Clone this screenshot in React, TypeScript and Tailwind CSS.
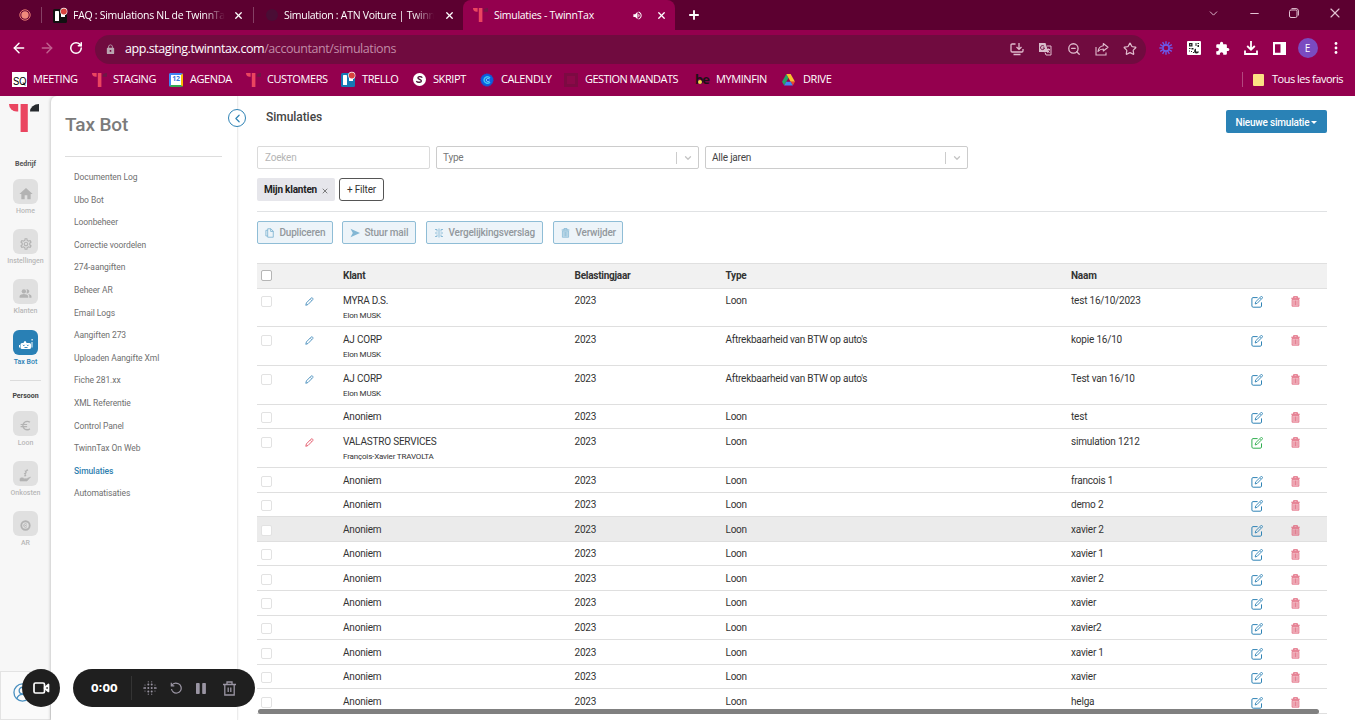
import type { ReactNode } from 'react';
import {
  ArrowLeft, ArrowRight, ChevronDown, ChevronLeft, Minus, Plus, RotateCw, Star, X, ZoomOut,
} from 'lucide-react';
import { MdEuroSymbol, MdExtension, MdHome, MdLock, MdOutlineSettings, MdPeopleAlt, MdVolumeUp } from 'react-icons/md';

type Row = {
  client: string;
  sub?: string;
  type: string;
  name: string;
  pencil?: string;
  edit?: string;
  active?: boolean;
};

const rows: Row[] = [
  { client: 'MYRA D.S.', sub: 'Elon MUSK', type: 'Loon', name: 'test 16/10/2023', pencil: 'text-[#3b87b8]' },
  { client: 'AJ CORP', sub: 'Elon MUSK', type: "Aftrekbaarheid van BTW op auto's", name: 'kopie 16/10', pencil: 'text-[#3b87b8]' },
  { client: 'AJ CORP', sub: 'Elon MUSK', type: "Aftrekbaarheid van BTW op auto's", name: 'Test van 16/10', pencil: 'text-[#3b87b8]' },
  { client: 'Anoniem', type: 'Loon', name: 'test' },
  { client: 'VALASTRO SERVICES', sub: 'François-Xavier TRAVOLTA', type: 'Loon', name: 'simulation 1212', pencil: 'text-[#e0485c]', edit: 'text-[#2fae4e]' },
  { client: 'Anoniem', type: 'Loon', name: 'francois 1' },
  { client: 'Anoniem', type: 'Loon', name: 'demo 2' },
  { client: 'Anoniem', type: 'Loon', name: 'xavier 2', active: true },
  { client: 'Anoniem', type: 'Loon', name: 'xavier 1' },
  { client: 'Anoniem', type: 'Loon', name: 'xavier 2' },
  { client: 'Anoniem', type: 'Loon', name: 'xavier' },
  { client: 'Anoniem', type: 'Loon', name: 'xavier2' },
  { client: 'Anoniem', type: 'Loon', name: 'xavier 1' },
  { client: 'Anoniem', type: 'Loon', name: 'xavier' },
  { client: 'Anoniem', type: 'Loon', name: 'helga' },
];

const menu = [
  'Documenten Log', 'Ubo Bot', 'Loonbeheer', 'Correctie voordelen', '274-aangiften', 'Beheer AR', 'Email Logs',
  'Aangiften 273', 'Uploaden Aangifte Xml', 'Fiche 281.xx', 'XML Referentie', 'Control Panel', 'TwinnTax On Web',
  'Simulaties', 'Automatisaties',
];

const COLS = 'grid grid-cols-[48px_38px_231.5px_151px_345.5px_179.5px_40px_36.5px]';

function TwinnLogo({ className, dark = '#262a2e' }: { className: string; dark?: string }) {
  return (
    <svg viewBox="0 0 30 28" className={className}>
      <path d="M0 0h9.2v7.4H7.5A7.5 7.4 0 0 1 0 0z" fill="#ea4560" />
      <path d="M11.6 0h7.2v28h-7.2z" fill="#ea4560" />
      <path d="M30 0v7.4h-9A9 7.4 0 0 1 30 0z" fill={dark} />
    </svg>
  );
}

function TrelloIcon({ bg }: { bg: string }) {
  return (
    <svg viewBox="0 0 15 15" className="size-[15px] shrink-0 overflow-visible">
      <rect y="1" width="14" height="14" rx="1.5" fill={bg} />
      <rect x="2" y="3" width="4" height="10" rx=".6" fill="#fff" />
      <rect x="8" y="3" width="4" height="6" rx=".6" fill="#fff" />
      <circle cx="10.8" cy="3.4" r="3.6" fill="#fff" />
      <circle cx="10.8" cy="3.4" r="3" fill="#d8443f" />
    </svg>
  );
}

function TrashIcon({ className }: { className: string }) {
  return (
    <svg viewBox="0 0 9 11" className={className} fill="none" stroke="currentColor">
      <path d="M.3 2.2h8.4M2.8 2V.8h3.4V2" strokeWidth="1.1" />
      <path d="M1.1 3.4h6.8v6.8H1.1z" fill="currentColor" fillOpacity=".35" strokeWidth=".8" />
      <path d="M3 4.4v4.8M4.5 4.4v4.8M6 4.4v4.8" strokeWidth=".7" />
    </svg>
  );
}

function EditIcon({ className }: { className: string }) {
  return (
    <svg viewBox="0 0 12 12" className={className} fill="none" stroke="currentColor" strokeWidth="1">
      <path d="M6.6 1.6H2A1.2 1.2 0 0 0 .9 2.8v7.2c0 .7.5 1.2 1.2 1.2h7.2c.7 0 1.2-.5 1.2-1.2V6.4" />
      <path d="M4.2 8l.5-2.2L9.8.8c.4-.4 1-.4 1.4 0s.4 1 0 1.4L6.2 7.3z" strokeWidth=".9" />
      <path d="M9 1.8l1.3 1.3" strokeWidth=".7" />
    </svg>
  );
}

function PencilIcon({ className }: { className: string }) {
  return (
    <svg viewBox="0 0 9 9" className={className} fill="none" stroke="currentColor" strokeWidth=".85">
      <path d="M.8 8.3l.6-2.4L6 1.2c.5-.5 1.2-.5 1.6 0 .5.4.5 1.1 0 1.6L3 7.5z" />
      <path d="M5.2 2.100l1.600 1.600" strokeWidth=".6" />
    </svg>
  );
}

function TabTitle({ children, className }: { children: ReactNode; className: string }) {
  return <span className={`py-1 text-[10.500px] leading-none tracking-[-0.28px] whitespace-nowrap ${className}`}>{children}</span>;
}

function TabStrip() {
  return (
    <div className="flex h-[30px] items-center bg-[#5c0030] text-white">
      <div className="flex w-[41px] justify-end pr-[10px]">
        <svg viewBox="0 0 12 12" className="size-3">
          <circle cx="6" cy="6" r="5.2" fill="none" stroke="#e87a72" strokeWidth="1" />
          <circle cx="6" cy="6" r="3.7" fill="#f08a7c" />
        </svg>
      </div>
      <div className="flex h-4 w-[212px] items-center border-l border-white/25 pl-[11px]">
        <TrelloIcon bg="#111111" />
        <TabTitle className="ml-[5px] w-[152px] [mask-image:linear-gradient(to_right,black_86%,transparent)]">FAQ : Simulations NL de TwinnTa</TabTitle>
        <X className="ml-[8px] size-[11px]" strokeWidth={2.8} />
      </div>
      <div className="flex h-4 w-[210px] items-center border-l border-white/25 pl-[12px]">
        <span className="size-3 shrink-0 rounded-full bg-[#4a0d35]" />
        <TabTitle className="ml-[6px] w-[150px] [mask-image:linear-gradient(to_right,black_86%,transparent)]">Simulation : ATN Voiture | Twinn</TabTitle>
        <X className="ml-[10px] size-[11px] shrink-0" strokeWidth={2.8} />
      </div>
      <div className="flex h-[30px] w-[212px] items-center rounded-t-lg bg-[#94004e] pl-[10px]">
        <TwinnLogo className="h-[14px] w-[15px]" dark="#6d1845" />
        <TabTitle className="ml-[6px] w-[130px]">Simulaties - TwinnTax</TabTitle>
        <MdVolumeUp className="ml-[8px] size-[11px]" />
        <X className="ml-[13px] size-[11px]" strokeWidth={2.8} />
      </div>
      <Plus className="ml-[12px] size-[14px]" strokeWidth={3.2} />
      <div className="ml-auto flex w-[162px] items-center pb-1 text-[#e3c3d3]">
        <ChevronDown className="ml-[14px] size-[13px]" strokeWidth={1.7} />
        <Minus className="ml-[28px] size-[13px]" strokeWidth={2} />
        <svg viewBox="0 0 10 10" className="ml-[28px] size-[10px]" fill="none" stroke="currentColor">
          <rect x=".5" y="2" width="7.5" height="7.5" rx="1.5" />
          <path d="M2.5.6H7A2.4 2.4 0 0 1 9.4 3v4.5" />
        </svg>
        <X className="ml-[28px] size-[16px]" strokeWidth={1.7} />
      </div>
    </div>
  );
}

function Toolbar() {
  return (
    <div className="flex h-[36px] items-center bg-[#94004e] text-white">
      <ArrowLeft className="ml-[11px] size-4" strokeWidth={2.2} />
      <ArrowRight className="ml-[12px] size-4 text-[#c0608f]" strokeWidth={2.2} />
      <RotateCw className="ml-[14px] size-[14px]" strokeWidth={2.6} />
      <div className="mt-[2px] ml-[12px] flex h-[29px] w-[1051px] items-center rounded-full bg-[#700b3f] text-[#e0bccd]">
        <MdLock className="ml-[10px] size-[11px] text-[#b9a5b0]" />
        <div className="ml-[9px] w-[878px] shrink-0 text-[12.500px] tracking-[-0.43px] whitespace-nowrap">
          <span className="text-white">app.staging.twinntax.com</span>
          <span className="text-[#c18aa6]">/accountant/simulations</span>
        </div>
        <div className="flex w-[142px] shrink-0">
          <div className="flex w-[28.300px] justify-center">
            <svg viewBox="0 0 14 14" className="size-[14px]" fill="none" stroke="currentColor" strokeWidth="1.3">
              <path d="M5.5 2H2.2Q1 2 1 3.2v5.6Q1 10 2.2 10h9.6q1.2 0 1.2-1.200V7M3.500 12.500h7M9 1v6M6.500 5L9 7.400 11.500 5" />
            </svg>
          </div>
          <div className="flex w-[28.300px] justify-center">
            <svg viewBox="0 0 14 14" className="size-[14px]" fill="none" stroke="currentColor">
              <path d="M1 1h6.500l3 9H1z" fill="#d9bccb" stroke="none" />
              <path d="M6.200 4.500A2 2 0 1 0 6.500 6H4.800" stroke="#700b3f" />
              <path d="M9 4h4v9H8l-1-2.500M9 7.500h3M10.500 6.500v1M11.500 7.500L9.500 11M9.500 8.500l2 2.300" />
            </svg>
          </div>
          <div className="flex w-[28.300px] justify-center"><ZoomOut className="size-[14px]" strokeWidth={2.2} /></div>
          <div className="flex w-[28.300px] justify-center">
            <svg viewBox="0 0 14 14" className="size-[14px]" fill="none" stroke="currentColor" strokeWidth="1.1">
              <path d="M1 5v8h10v-2.500" />
              <path d="M8.300 1.500L13 5.300 8.300 9V7C6 7 4.500 7.600 3 9.500c.4-3 2.300-5.300 5.300-5.700z" strokeLinejoin="round" />
            </svg>
          </div>
          <div className="flex w-[28.300px] justify-center"><Star className="size-[14px]" strokeWidth={2.1} /></div>
        </div>
      </div>
      <div className="ml-[6px] flex w-[198px] shrink-0 items-center">
        <div className="flex w-[28.300px] justify-center">
          <svg viewBox="-7 -7 14 14" className="size-[14px]" stroke="#6a5cf0" strokeWidth="1.3">
            {[0, 30, 60, 90, 120, 150, 180, 210, 240, 270, 300, 330].map((a) => (
              <path key={a} d="M0-2.600V-6.700" transform={`rotate(${a})`} />
            ))}
            <circle r="3" fill="none" />
          </svg>
        </div>
        <div className="flex w-[28.300px] justify-center">
          <svg viewBox="0 0 14 14" className="size-[14px]">
            <rect width="14" height="14" rx="1" fill="#fff" />
            <path d="M2 2h3.500v3.500H2zM8.500 2h1v3h-1zM10.500 2H12v1h-1.500zM10.500 4H12v2h-1.500zM2 7h1.500v1H2zM4.500 7h2v1.500h-2zM2 9.500h1v1H2zM4 10h1v1H4zM6 11h1v1H6z" fill="#222" />
            <path d="M3.200 3.200h1v1h-1z" fill="#fff" />
            <path d="M9 7.500a2.500 2.500 0 1 0 3 3H9z" fill="#222" />
          </svg>
        </div>
        <div className="flex w-[28.300px] justify-center"><MdExtension className="size-[15px]" /></div>
        <div className="flex w-[28.300px] justify-center">
          <svg viewBox="0 0 14 14" className="size-[14px]" fill="none" stroke="currentColor" strokeWidth="1.800">
            <path d="M7 0v8.500M3.200 5L7 8.700 10.800 5M1 9.500V13h12V9.500" />
          </svg>
        </div>
        <div className="flex w-[28.300px] justify-center">
          <svg viewBox="0 0 13 13" className="size-[13px]">
            <path d="M0 0h13v13H0zM2 2.200v8.600h5.500V2.200z" fill="#fff" fillRule="evenodd" />
          </svg>
        </div>
        <div className="flex w-[28.300px] justify-center">
          <span className="flex size-5 shrink-0 items-center justify-center rounded-full bg-[#7a4bc0] text-[10px]">E</span>
        </div>
        <div className="flex w-[28.300px] justify-center">
          <svg viewBox="0 0 4 14" className="h-[14px] w-1" fill="#fff">
            <circle cx="2" cy="2.500" r="1.400" />
            <circle cx="2" cy="7" r="1.400" />
            <circle cx="2" cy="11.500" r="1.400" />
          </svg>
        </div>
      </div>
    </div>
  );
}

function Bookmark({ icon, label, className }: { icon: ReactNode; label: string; className: string }) {
  return (
    <div className={`flex items-center whitespace-nowrap ${className}`}>
      <span className="flex w-[21px] shrink-0">{icon}</span>
      {label}
    </div>
  );
}

function BookmarksBar() {
  return (
    <div className="flex h-[30px] items-center bg-[#94004e] pb-[3px] pl-[12px] text-[11px] tracking-[-0.42px] text-white">
      <Bookmark
        label="MEETING"
        className="w-[80px]"
        icon={<span className="flex size-[15px] items-end justify-center bg-white font-['Inter'] text-[10px] leading-[11px] tracking-tighter text-black">SQ</span>}
      />
      <Bookmark label="STAGING" className="w-[77px] tracking-[-0.5px]" icon={<TwinnLogo className="h-[14px] w-[15px]" dark="#6d1845" />} />
      <Bookmark
        label="AGENDA"
        className="w-[77px]"
        icon={
          <span className="flex size-[14px] items-center justify-center rounded-[2px] border-2 border-t-[#4285f4] border-r-[#fbbc04] border-b-[#34a853] border-l-[#4285f4] bg-white text-[7px] font-bold tracking-tighter text-[#3b78e0]">12</span>
        }
      />
      <Bookmark label="CUSTOMERS" className="w-[95px]" icon={<TwinnLogo className="h-[14px] w-[15px]" dark="#6d1845" />} />
      <Bookmark label="TRELLO" className="w-[71px]" icon={<TrelloIcon bg="#1679b5" />} />
      <Bookmark
        label="SKRIPT"
        className="w-[68px]"
        icon={
          <svg viewBox="0 0 13 13" className="ml-px size-[13px]">
            <circle cx="6.500" cy="6.500" r="6.500" fill="#fff" />
            <path d="M9.300 4.600C8 3 5 3.300 4.900 4.900S8.500 6.300 8.400 8 4.600 9.600 3.300 8.200" fill="none" stroke="#4a0a30" strokeWidth="1.300" />
          </svg>
        }
      />
      <Bookmark
        label="CALENDLY"
        className="w-[84px]"
        icon={
          <svg viewBox="0 0 14 14" className="size-[14px]" fill="none">
            <circle cx="7" cy="7" r="6.200" fill="#0a5fdf" stroke="#2b49b8" strokeDasharray="1.500 1" />
            <path d="M10 5C8 2.600 4 4 4 7s4 4.400 6 2" stroke="#3fc8f4" strokeWidth="1.400" />
            <path d="M9.500 6C8 5 6.200 5.500 6.200 7S8 9 9.500 8" stroke="#8fdcff" />
          </svg>
        }
      />
      <Bookmark label="GESTION MANDATS" className="w-[131px] tracking-[-0.55px]" icon={<span className="size-[14px] border-[3px] border-[#7c0a42] bg-[#8c0849]" />} />
      <Bookmark
        label="MYMINFIN"
        className="w-[87px]"
        icon={
          <span className="relative flex h-[14px] items-center text-[13px] leading-none font-bold tracking-[-1px] text-[#1c1015]">
            <span className="absolute bottom-[3px] left-[3px] size-[4px] rounded-full bg-[#f3d84c]" />
            be
          </span>
        }
      />
      <Bookmark
        label="DRIVE"
        className="w-[60px]"
        icon={
          <svg viewBox="0 0 14 13" className="h-[12px] w-[13px]">
            <path d="M4.700 0L0 8.500 2.300 12.500 7 4.200z" fill="#22a565" />
            <path d="M4.700 0h4.600L14 8.500H9.300z" fill="#fbc02d" />
            <path d="M9.300 8.500H14l-2.300 4z" fill="#e94335" />
            <path d="M4.600 8.500h4.700l2.400 4H2.300z" fill="#4285f4" />
          </svg>
        }
      />
      <div className="ml-auto flex h-[15px] items-center border-l border-[#b3477f] pr-[12px] pl-[10px]">
        <span className="mr-[8px] h-3 w-[11px] rounded-[1px] bg-[#fbe083]" />
        <span className="w-[71px] text-[11px] tracking-[-0.5px] whitespace-nowrap">Tous les favoris</span>
      </div>
    </div>
  );
}

function RailItem({ icon, label, active }: { icon: ReactNode; label: string; active?: boolean }) {
  return (
    <div className="flex h-[50.200px] flex-col items-center">
      <div className={`flex size-[25px] items-center justify-center rounded-[6px] pt-1 ${active ? 'bg-[#2980b5] text-white' : 'bg-[#e0e0e0] text-[#b3b3b3]'}`}>
        {icon}
      </div>
      <span className={`mt-[3px] text-[7px] leading-[8px] font-medium ${active ? 'text-[#2980b5]' : 'text-[#b8b8b8]'}`}>{label}</span>
    </div>
  );
}

function Rail() {
  return (
    <nav className="flex w-[51px] shrink-0 flex-col bg-[#f7f7f7]">
      <TwinnLogo className="mt-[8px] ml-[9px] h-[28px] w-[30px]" />
      <p className="mt-[28px] mb-[11px] text-center text-[7px] leading-[8px] font-bold text-[#555]">Bedrijf</p>
      <RailItem label="Home" icon={<MdHome className="size-4" />} />
      <RailItem label="Instellingen" icon={<MdOutlineSettings className="size-[14px]" />} />
      <RailItem label="Klanten" icon={<MdPeopleAlt className="size-[13px]" />} />
      <RailItem
        label="Tax Bot"
        active
        icon={
          <svg viewBox="0 0 14 12" className="h-3 w-[14px]" fill="currentColor">
            <path d="M1.500 6.500Q1.500 5 3 5h1.500l.8-1.800h1.500L7.500 5h3q1.500 0 1.500 1.500v3q0 1.500-1.500 1.500H3Q1.500 11 1.500 9.500zM0 7h1v2.500H0zM12.500 4h1v5.500h-1zM12.500 1h1.200v1.500h-1.200z" />
            <path d="M4 6.800l.8 1 .8-1M8 6.800l.8 1 .8-1M5.500 9.500h3" fill="none" stroke="#2980b5" strokeWidth=".9" />
          </svg>
        }
      />
      <div className="mx-[10px] border-t border-[#dcdcdc]" />
      <p className="mt-[11px] mb-[11px] text-center text-[7px] leading-[8px] font-bold text-[#444]">Persoon</p>
      <RailItem label="Loon" icon={<MdEuroSymbol className="size-[13px]" />} />
      <RailItem
        label="Onkosten"
        icon={
          <svg viewBox="0 0 13 13" className="size-[13px]" fill="none" stroke="currentColor">
            <path d="M1 9.500c1.500-1.300 3-.8 4.300.2h2.200L11.500 8 8 12H1z" fill="currentColor" strokeWidth=".6" />
            <path d="M9 .8L6.500 2l1 1.600-1.800 1.200.8 1.500L5 7.500" strokeWidth="1.400" strokeDasharray="2 .6" />
          </svg>
        }
      />
      <RailItem
        label="AR"
        icon={
          <svg viewBox="0 0 12 12" className="size-[11px]" fill="none" stroke="currentColor">
            <circle cx="6" cy="6" r="4.600" strokeWidth="2" />
            <path d="M7.600 4.800a2 2 0 1 0 0 2.400M5 6h2" strokeWidth=".9" />
          </svg>
        }
      />
      <div className="mt-auto flex h-[49px] border border-[#e3e3e3] bg-[#fafafa] pt-[11px] pl-[12px]">
        <svg viewBox="0 0 20 20" className="size-[19px]" fill="none" stroke="#4a90c0" strokeWidth="1.400">
          <circle cx="10" cy="10" r="9" />
          <circle cx="10" cy="8" r="3.500" />
          <path d="M4 16.500c1-3 3-4.500 6-4.500s5 1.500 6 4.500" />
        </svg>
      </div>
    </nav>
  );
}

function SidePanel() {
  return (
    <aside className="relative w-[187px] shrink-0 rounded-tl-[6px] border-r border-[#ececec] bg-white pl-[14px] shadow-[-1px_0_3px_rgba(0,0,0,0.18)]">
      <h1 className="mr-[15px] h-[61px] border-b border-[#dddddd] pt-[17px] text-[19px] leading-[24px] font-medium tracking-[-0.1px] text-[#7b7b7b]">Tax Bot</h1>
      <ul className="mt-[9px] pl-[9px] text-[8.500px] tracking-[-0.08px] text-[#6f6f6f]">
        {menu.map((item) => (
          <li key={item} className={`flex h-[22.620px] items-center ${item === 'Simulaties' ? 'font-medium text-[#2f7fb0]' : ''}`}>{item}</li>
        ))}
      </ul>
      <span className="absolute top-[13px] -right-[9px] flex size-[18px] items-center justify-center rounded-full border-[1.500px] border-[#2f83b5] bg-white text-[#2f83b5]">
        <ChevronLeft className="size-[13px]" strokeWidth={2.2} />
      </span>
    </aside>
  );
}

function Select({ label, className }: { label: string; className: string }) {
  return (
    <div className={`flex h-[23px] w-[263px] items-center rounded-[2px] border border-[#cccccc] pl-[6px] ${className}`}>
      {label}
      <span className="ml-auto h-3 border-l border-[#cccccc]" />
      <span className="flex w-[21px] justify-center"><ChevronDown className="size-[10px] text-[#c4c4c4]" strokeWidth={3} /></span>
    </div>
  );
}

function ActionButton({ icon, label, className }: { icon: ReactNode; label: string; className: string }) {
  return (
    <button className={`flex h-[23px] items-center rounded-[2px] border border-[#8fbdd6] bg-[#edf4f9] pl-[7px] font-medium whitespace-nowrap text-[#92989d] ${className}`}>
      <span className="flex w-[14.500px] shrink-0 text-[#83b7d4]">{icon}</span>
      {label}
    </button>
  );
}

function Checkbox({ className }: { className: string }) {
  return <span className={`ml-1 size-[11px] rounded-[2px] border bg-white ${className}`} />;
}

function Main() {
  return (
    <main className="relative min-w-0 flex-1 pl-[19px] text-[10px] tracking-[-0.2px] text-[#333]">
      <div className="flex h-[50px] w-[1070px] justify-between">
        <h2 className="pt-[14px] pl-[9px] text-[12px] leading-[15px] font-medium tracking-[-0.05px] text-[#444]">Simulaties</h2>
        <button className="mt-[14px] flex h-[23px] w-[101px] items-center justify-center rounded-[2px] bg-[#2a82b6] pt-px text-[10px] font-medium whitespace-nowrap text-white">
          Nieuwe simulatie
          <span className="mt-px ml-[2px] border-x-[3px] border-t-[3px] border-x-transparent border-t-white" />
        </button>
      </div>
      <div className="flex">
        <div className="flex h-[23px] w-[173px] items-center rounded-[2px] border border-[#dadada] pl-[7px] text-[#b5b5b5]">Zoeken</div>
        <Select label="Type" className="ml-[6px] text-[#777]" />
        <Select label="Alle jaren" className="ml-[6px] text-[#444]" />
      </div>
      <div className="mt-[9px] flex h-[34px] w-[1070px] border-b border-[#e0e2e4]">
        <div className="flex h-[23px] w-[78px] items-center rounded-[2px] bg-[#e6e6eb] pl-[7px] font-bold whitespace-nowrap text-[#222]">
          Mijn klanten
          <X className="mt-[2px] ml-[4px] size-[8px] text-[#666]" strokeWidth={2.5} />
        </div>
        <button className="ml-[4px] h-[23px] w-[45px] rounded-[3px] border border-[#555] whitespace-nowrap">+ Filter</button>
      </div>
      <div className="mt-[9px] flex">
        <ActionButton
          label="Dupliceren"
          className="w-[76px]"
          icon={
            <svg viewBox="0 0 10 11" className="h-[10px] w-[9px]" fill="none" stroke="currentColor">
              <path d="M3 .8h3.500L9.200 3.500v6.700H3zM6.300.8v3h3M3 2.500H1v6.300h2" />
            </svg>
          }
        />
        <ActionButton
          label="Stuur mail"
          className="ml-[9px] w-[74px]"
          icon={<svg viewBox="0 0 10 10" className="size-[10px]" fill="currentColor"><path d="M.5.800L10 5 .5 9.200 2.800 5z" /></svg>}
        />
        <ActionButton
          label="Vergelijkingsverslag"
          className="ml-[10px] w-[117px]"
          icon={
            <svg viewBox="0 0 10 10" className="size-[10px]" fill="none" stroke="currentColor">
              <path d="M5 .5v9M1 1.500h2v2M1 5h2.500M6.500 5H9M1 8.500h2v-2M9 1.500H7v2M9 8.500H7v-2" strokeWidth=".9" />
            </svg>
          }
        />
        <ActionButton label="Verwijder" className="ml-[10px] w-[70px]" icon={<TrashIcon className="h-[10px] w-[9px]" />} />
      </div>

      <div className="mt-[19px] w-[1070px]">
        <div className={`${COLS} h-[25.500px] items-center border-y border-[#e0e0e0] bg-[#f1f1f1] font-bold`}>
          <Checkbox className="border-[#b5b5b5]" />
          <span />
          <span>Klant</span>
          <span className="tracking-[-0.25px]">Belastingjaar</span>
          <span>Type</span>
          <span>Naam</span>
        </div>
        {rows.map((row, i) => (
          <div
            key={i}
            className={`${COLS} border-b border-[#dfdfdf] pt-[6.500px] leading-[12px] ${row.sub ? 'h-[38.800px]' : 'h-[24.550px]'} ${row.active ? 'bg-[#ebebeb]' : ''}`}
          >
            <Checkbox className="mt-px border-[#e2e2e2]" />
            <span>{row.pencil && <PencilIcon className={`mt-[2px] size-[9px] ${row.pencil}`} />}</span>
            <span>
              {row.client}
              {row.sub && <span className="mt-[4px] block text-[8px] leading-[10px] tracking-[-0.17px]">{row.sub}</span>}
            </span>
            <span>2023</span>
            <span className="tracking-[-0.24px]">{row.type}</span>
            <span>{row.name}</span>
            <EditIcon className={`mt-px size-[12px] ${row.edit ?? 'text-[#2f83b5]'}`} />
            <TrashIcon className="mt-px h-[11px] w-[9px] text-[#e0637a]" />
          </div>
        ))}
      </div>
      <div className="absolute top-[613px] left-[20px] h-[5px] w-[1061px] rounded-full bg-[#808080]" />
    </main>
  );
}

const bigDots = [[5.3, 3.6], [8.7, 3.6], [2, 7], [5.3, 7], [8.7, 7], [12, 7], [5.3, 10.4], [8.700, 10.4]];
const smallDots = [[5.3, .8], [8.7, .8], [2, 4], [12, 4], [.4, 7], [13.6, 7], [2, 10], [12, 10], [5.3, 13.2], [8.7, 13.2]];

function Recorder() {
  return (
    <div className="absolute top-[669px] left-[22px] flex items-center text-white">
      <div className="flex size-[38px] items-center justify-center rounded-full bg-[#1f1f1f]">
        <svg viewBox="0 0 17 12" className="h-3 w-[17px]" fill="none" stroke="#fff" strokeWidth="1.700">
          <rect x="1" y="1" width="10.500" height="10" rx="1.500" />
          <path d="M11.500 6l4-3.500v7z" strokeLinejoin="round" />
        </svg>
      </div>
      <div className="ml-[13px] flex h-[38px] w-[182px] items-center rounded-full bg-[#1f1f1f] text-[#9a95a3]">
        <span className="ml-[18px] w-[40px] pt-px font-['Inter'] text-[11px] font-extrabold text-white">0:00</span>
        <span className="h-6 border-l border-[#343434]" />
        <svg viewBox="0 0 14 14" className="ml-[11px] size-[14px] shrink-0" fill="currentColor">
          {bigDots.map(([x, y]) => <circle key={`${x}-${y}`} cx={x} cy={y} r="1" />)}
          {smallDots.map(([x, y]) => <circle key={`${x}-${y}`} cx={x} cy={y} r=".6" />)}
        </svg>
        <svg viewBox="0 0 12 12" className="ml-[13px] size-3 shrink-0" fill="none" stroke="currentColor" strokeWidth="1.200">
          <path d="M1.500 3.500C3 1.300 6 .6 8.500 1.800s3.500 4.300 2 6.900-5.100 3.100-7.300 1.300A5 5 0 0 1 1.500 7M1.300.8v3h3" />
        </svg>
        <svg viewBox="0 0 10 11" className="ml-[14px] h-[11px] w-[10px] shrink-0" fill="currentColor">
          <rect width="3.700" height="11" rx=".8" />
          <rect x="6.200" width="3.700" height="11" rx=".8" />
        </svg>
        <svg viewBox="0 0 13 15" className="ml-[17px] h-[15px] w-[13px] shrink-0" fill="none" stroke="currentColor" strokeWidth="1.300">
          <path d="M0 3.500h13M4 3.300V1h5v2.300M1.800 3.500V14h9.400V3.500M5.200 6.500v4.500M7.800 6.500v4.500" />
        </svg>
      </div>
    </div>
  );
}

export default function App() {
  return (
    <div className="relative flex h-[720px] w-[1355px] flex-col overflow-hidden bg-white font-['Roboto',sans-serif]">
      <header className="h-[96px] shrink-0 font-['Open_Sans',sans-serif]">
        <TabStrip />
        <Toolbar />
        <BookmarksBar />
      </header>
      <div className="flex h-[624px] bg-white">
        <div className="flex bg-[#f7f7f7]">
          <Rail />
          <SidePanel />
        </div>
        <Main />
      </div>
      <Recorder />
    </div>
  );
}
